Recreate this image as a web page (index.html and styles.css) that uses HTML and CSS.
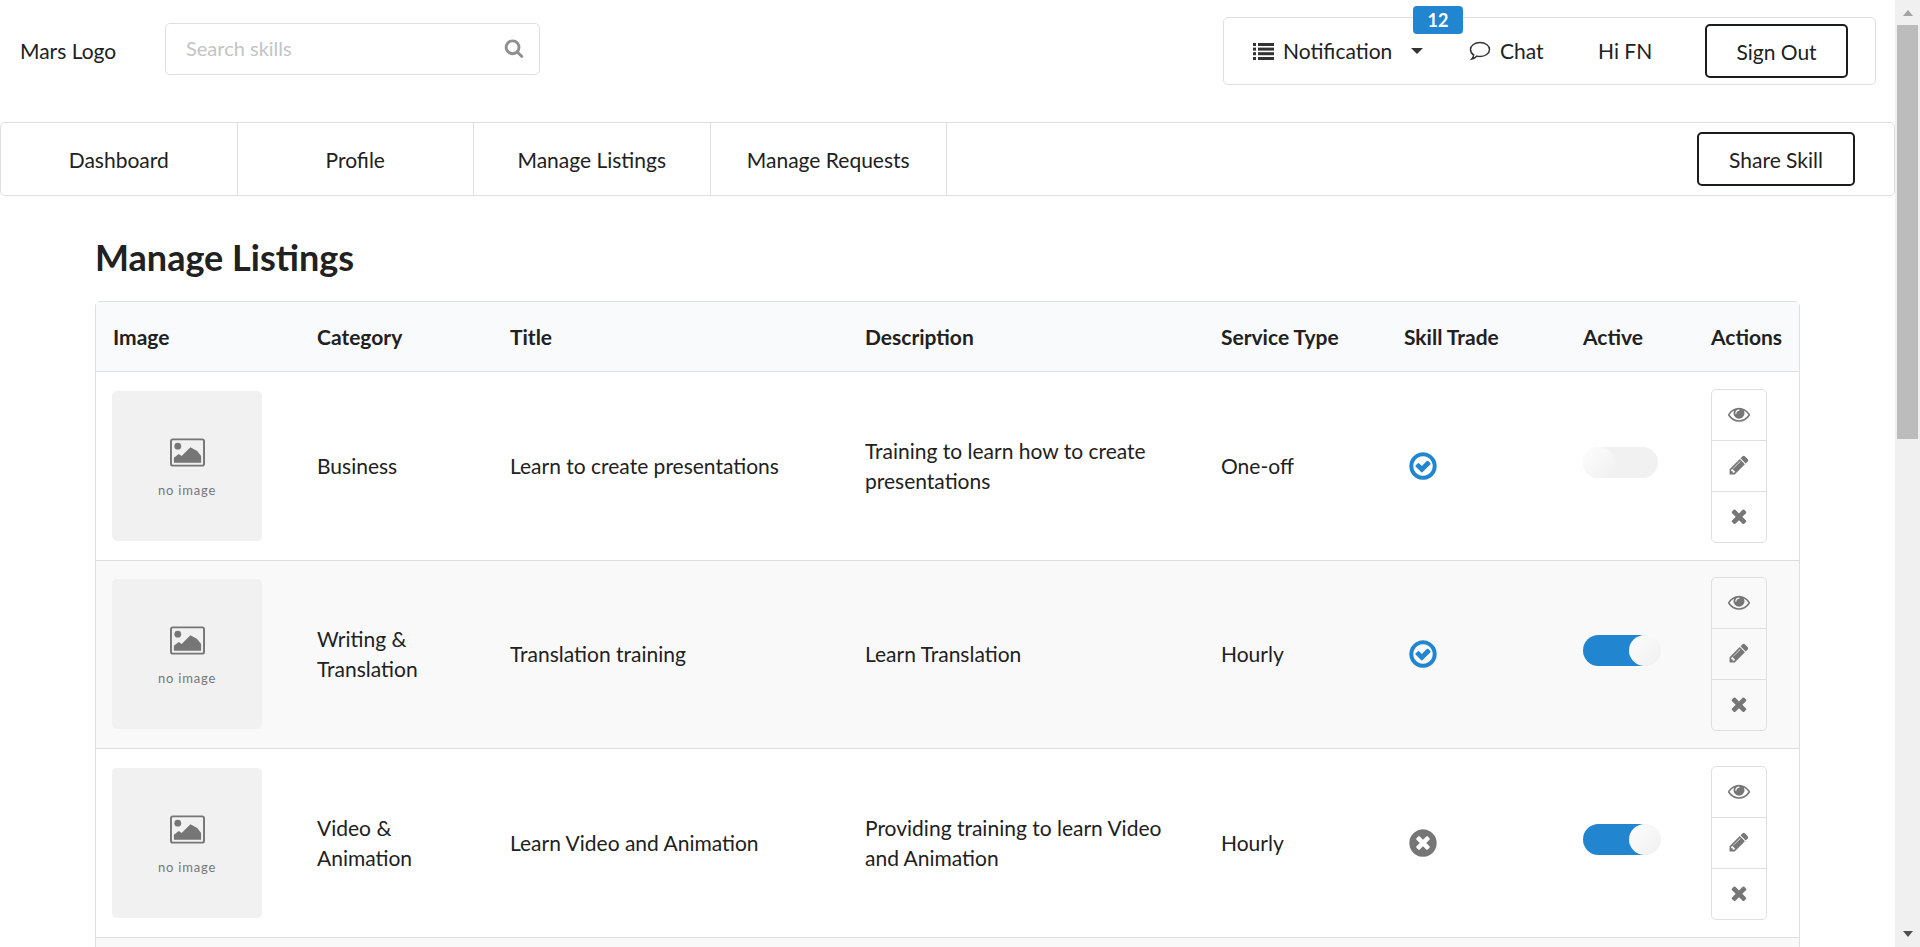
FILE: index.html
```html
<!DOCTYPE html>
<html lang="en">
<head>
  <meta charset="UTF-8" />
  <title>Manage Listings</title>
  <link rel="stylesheet" href="styles.css">
</head>
<body>
  <svg class="sprites" width="0" height="0">
    <symbol id="i-search" viewBox="0 0 1792 1792"><path d="M1216 832q0-185-131.500-316.500t-316.500-131.500-316.500 131.500-131.500 316.500 131.500 316.500 316.500 131.500 316.500-131.500 131.500-316.500zm512 832q0 52-38 90t-90 38q-54 0-90-38l-343-342q-179 124-399 124-143 0-273.500-55.500t-225-150-150-225-55.500-273.500 55.500-273.500 150-225 225-150 273.500-55.500 273.500 55.500 225 150 150 225 55.500 273.500q0 220-124 399l343 343q37 37 37 90z"/></symbol>
    <symbol id="i-eye" viewBox="0 0 1792 1792"><path d="M1664 960q-152-236-381-353 61 104 61 225 0 185-131.500 316.500t-316.500 131.500-316.500-131.500-131.500-316.500q0-121 61-225-229 117-381 353 133 205 333.500 326.500t434.500 121.500 434.500-121.500 333.500-326.500zm-720-384q0-20-14-34t-34-14q-125 0-214.500 89.500t-89.500 214.500q0 20 14 34t34 14 34-14 14-34q0-86 61-147t147-61q20 0 34-14t14-34zm848 384q0 34-20 69-140 230-376.500 368.500t-499.500 138.500-499.500-139-376.500-368q-20-35-20-69t20-69q140-229 376.500-368t499.500-139 499.500 139 376.500 368q20 35 20 69z"/></symbol>
    <symbol id="i-pencil" viewBox="0 0 1792 1792"><path d="M491 1536l91-91-235-235-91 91v107h128v128h107zm523-928q0-22-22-22-10 0-17 7l-542 542q-7 7-7 17 0 22 22 22 10 0 17-7l542-542q7-7 7-17zm-54-192l416 416-832 832h-416v-416zm683 96q0 53-37 90l-166 166-416-416 166-165q36-38 90-38 53 0 91 38l235 234q37 39 37 91z"/></symbol>
    <symbol id="i-times" viewBox="0 0 1792 1792"><path d="M1490 1322q0 40-28 68l-136 136q-28 28-68 28t-68-28l-294-294-294 294q-28 28-68 28t-68-28l-136-136q-28-28-28-68t28-68l294-294-294-294q-28-28-28-68t28-68l136-136q28-28 68-28t68 28l294 294 294-294q28-28 68-28t68 28l136 136q28 28 28 68t-28 68l-294 294 294 294q28 28 28 68z"/></symbol>
    <symbol id="i-check" viewBox="0 0 1792 1792"><path d="M1299 813l-422 422q-19 19-45 19t-45-19l-294-294q-19-19-19-45t19-45l102-102q19-19 45-19t45 19l147 147 275-275q19-19 45-19t45 19l102 102q19 19 19 45t-19 45zm141 83q0-148-73-273t-198-198-273-73-273 73-198 198-73 273 73 273 198 198 273 73 273-73 198-198 73-273zm224 0q0 209-103 385.500t-279.500 279.500-385.500 103-385.500-103-279.500-279.500-103-385.500 103-385.500 279.500-279.500 385.500-103 385.500 103 279.500 279.500 103 385.500z"/></symbol>
    <symbol id="i-cross" viewBox="0 0 1792 1792"><path d="M1277 1122q0-26-19-45l-181-181 181-181q19-19 19-45 0-27-19-46l-90-90q-19-19-46-19-26 0-45 19l-181 181-181-181q-19-19-45-19-27 0-46 19l-90 90q-19 19-19 46 0 26 19 45l181 181-181 181q-19 19-19 45 0 27 19 46l90 90q19 19 46 19 26 0 45-19l181-181 181 181q19 19 45 19 27 0 46-19l90-90q19-19 19-46zm387-226q0 209-103 385.500t-279.500 279.500-385.500 103-385.500-103-279.500-279.500-103-385.500 103-385.500 279.500-279.500 385.500-103 385.500 103 279.500 279.500 103 385.500z"/></symbol>
    <symbol id="i-picture" viewBox="0 0 36 29">
      <rect x="1" y="1" width="34" height="27" rx="2" fill="none" stroke="currentColor" stroke-width="2"/>
      <circle cx="8" cy="8" r="3.500"/>
      <path d="M4 25v-5l5-4 3 2 9-9 7 4 4 5v7z"/>
    </symbol>
  </svg>

  <div class="window">
    <div class="page">
      <header class="topbar">
        <div class="logo">Mars Logo</div>
        <div class="search">
          <span>Search skills</span>
          <svg class="search-icon"><use href="#i-search"/></svg>
        </div>
        <div class="user-menu">
          <div class="notif">
            <svg class="list-icon" viewBox="0 0 21 17">
              <rect x="0" y="0" width="3" height="3"/><rect x="5" y="0" width="16" height="3"/>
              <rect x="0" y="4.600" width="3" height="3"/><rect x="5" y="4.600" width="16" height="3"/>
              <rect x="0" y="9.200" width="3" height="3"/><rect x="5" y="9.200" width="16" height="3"/>
              <rect x="0" y="14" width="3" height="3"/><rect x="5" y="14" width="16" height="3"/>
            </svg>
            <span>Notification</span>
            <span class="caret"></span>
            <span class="badge">12</span>
          </div>
          <div class="chat">
            <svg class="chat-icon" viewBox="0 0 22 20">
              <path d="M11 1.500c5.200 0 9.500 3 9.500 7s-4.300 7-9.500 7c-1 0-2-.1-3-.4-1.200 1.300-3 2.500-5.200 2.900 1-1.100 1.700-2.400 1.900-4C2.800 12.800 1.500 10.800 1.500 8.500c0-4 4.300-7 9.500-7z"/>
            </svg>
            <span>Chat</span>
          </div>
          <div class="hi">Hi FN</div>
          <button class="btn signout">Sign Out</button>
        </div>
      </header>

      <nav class="tabs">
        <a>Dashboard</a>
        <a>Profile</a>
        <a>Manage Listings</a>
        <a>Manage Requests</a>
        <button class="btn share">Share Skill</button>
      </nav>

      <main class="content">
        <h1>Manage Listings</h1>
        <table class="listings">
          <thead>
            <tr>
              <th class="c-image">Image</th>
              <th class="c-cat">Category</th>
              <th class="c-title">Title</th>
              <th class="c-desc">Description</th>
              <th class="c-type">Service Type</th>
              <th class="c-trade">Skill Trade</th>
              <th class="c-active">Active</th>
              <th class="c-actions">Actions</th>
            </tr>
          </thead>
          <tbody>
            <tr>
              <td><div class="noimg"><svg><use href="#i-picture"/></svg><span>no image</span></div></td>
              <td>Business</td>
              <td>Learn to create presentations</td>
              <td>Training to learn how to create presentations</td>
              <td>One-off</td>
              <td><svg class="trade yes"><use href="#i-check"/></svg></td>
              <td><span class="toggle"></span></td>
              <td>
                <div class="actions">
                  <span><svg><use href="#i-eye"/></svg></span>
                  <span><svg><use href="#i-pencil"/></svg></span>
                  <span><svg><use href="#i-times"/></svg></span>
                </div>
              </td>
            </tr>
            <tr>
              <td><div class="noimg"><svg><use href="#i-picture"/></svg><span>no image</span></div></td>
              <td>Writing &amp; Translation</td>
              <td>Translation training</td>
              <td>Learn Translation</td>
              <td>Hourly</td>
              <td><svg class="trade yes"><use href="#i-check"/></svg></td>
              <td><span class="toggle on"></span></td>
              <td>
                <div class="actions">
                  <span><svg><use href="#i-eye"/></svg></span>
                  <span><svg><use href="#i-pencil"/></svg></span>
                  <span><svg><use href="#i-times"/></svg></span>
                </div>
              </td>
            </tr>
            <tr>
              <td><div class="noimg"><svg><use href="#i-picture"/></svg><span>no image</span></div></td>
              <td>Video &amp; Animation</td>
              <td>Learn Video and Animation</td>
              <td>Providing training to learn Video and Animation</td>
              <td>Hourly</td>
              <td><svg class="trade no"><use href="#i-cross"/></svg></td>
              <td><span class="toggle on"></span></td>
              <td>
                <div class="actions">
                  <span><svg><use href="#i-eye"/></svg></span>
                  <span><svg><use href="#i-pencil"/></svg></span>
                  <span><svg><use href="#i-times"/></svg></span>
                </div>
              </td>
            </tr>
            <tr>
              <td></td><td></td><td></td><td></td><td></td><td></td><td></td><td></td>
            </tr>
          </tbody>
        </table>
      </main>
    </div>

    <div class="scrollbar">
      <span class="arrow up"></span>
      <div class="track"><div class="thumb"></div></div>
      <span class="arrow down"></span>
    </div>
  </div>
</body>
</html>
```

FILE: styles.css
```css
:root {
  --text: #212121;
  --border: #dfdfdf;
  --blue: #2185d0;
  --icon: #767676;
}

html, body {
  margin: 0;
  height: 947px;
  overflow: hidden;
}

body {
  font-family: 'Lato', sans-serif;
  font-size: 21px;
  line-height: 30px;
  color: var(--text);
  background: #fff;
}

.sprites {
  position: absolute;
}

.window {
  display: flex;
  height: 947px;
}

.page {
  width: 1895px;
  flex: none;
  overflow: hidden;
}

/* top bar */
.topbar {
  display: flex;
  align-items: flex-start;
  height: 122px;
}

.logo {
  width: 165px;
  padding: 36px 0 0 20px;
  box-sizing: border-box;
}

.search {
  display: flex;
  align-items: center;
  justify-content: space-between;
  width: 375px;
  height: 52px;
  margin-top: 23px;
  padding: 0 15px 2px 20px;
  box-sizing: border-box;
  border: 1px solid var(--border);
  border-radius: 5px;
  color: #c4c4c4;
  font-size: 20px;
}

.search-icon {
  width: 20px;
  height: 20px;
  fill: #8f8f8f;
}

.user-menu {
  display: flex;
  align-items: center;
  width: 653px;
  height: 68px;
  margin: 17px 19px 0 auto;
  padding-left: 29px;
  box-sizing: border-box;
  border: 1px solid var(--border);
  border-radius: 5px;
}

.notif {
  position: relative;
  display: flex;
  align-items: center;
  width: 216px;
}

.list-icon {
  width: 21px;
  height: 17px;
  margin-right: 9px;
  fill: #333;
}

.caret {
  width: 0;
  height: 0;
  margin-left: 19px;
  border: 6px solid transparent;
  border-top-color: #333;
  border-bottom: 0;
}

.badge {
  position: absolute;
  left: 160px;
  top: -30px;
  width: 50px;
  height: 28px;
  background: var(--blue);
  border-radius: 4px;
  color: #fff;
  font-size: 18px;
  font-weight: 700;
  line-height: 28px;
  text-align: center;
}

.chat {
  display: flex;
  align-items: center;
  width: 129px;
}

.chat-icon {
  width: 22px;
  height: 20px;
  margin-right: 9px;
  fill: none;
  stroke: #333;
  stroke-width: 1.500;
}

.hi {
  width: 107px;
}

.btn {
  font-family: inherit;
  font-size: 21px;
  color: var(--text);
  background: #fff;
  border: 2px solid #1b1c1d;
  border-radius: 5px;
  padding: 0;
}

.signout {
  width: 143px;
  height: 54px;
}

/* tabs */
.tabs {
  display: flex;
  align-items: center;
  height: 74px;
  box-sizing: border-box;
  border: 1px solid var(--border);
  border-radius: 5px;
}

.tabs a {
  width: 236.500px;
  height: 100%;
  flex: none;
  box-sizing: border-box;
  border-right: 1px solid var(--border);
  text-align: center;
  line-height: 74px;
}

.share {
  width: 158px;
  height: 54px;
  margin-left: auto;
  margin-right: 39px;
}

/* content */
.content {
  padding: 0 95px;
}

h1 {
  margin: 0;
  height: 105px;
  box-sizing: border-box;
  padding-top: 39px;
  font-size: 36px;
  line-height: 44px;
  font-weight: 700;
}

.listings {
  width: 1705px;
  table-layout: fixed;
  border-collapse: separate;
  border-spacing: 0;
  border: 1px solid var(--border);
  border-radius: 5px;
}

.listings th {
  height: 70px;
  padding: 0 17px;
  box-sizing: border-box;
  background: #f9fafb;
  border-bottom: 1px solid var(--border);
  text-align: left;
  font-weight: 700;
  white-space: nowrap;
}

.c-image { width: 204px; }
.c-cat { width: 193px; }
.c-title { width: 355px; }
.c-desc { width: 356px; }
.c-type { width: 183px; }
.c-trade { width: 179px; }
.c-active { width: 128px; }
.c-actions { width: 105px; }

.listings td {
  height: 188.500px;
  padding: 0 17px;
  box-sizing: border-box;
  border-bottom: 1px solid var(--border);
}

.listings tbody tr:nth-child(even) td {
  background: #f9f9f9;
}

.noimg {
  display: flex;
  flex-direction: column;
  align-items: center;
  width: 150px;
  height: 150px;
  margin-left: -1px;
  padding-top: 47px;
  box-sizing: border-box;
  background: #f1f1f1;
  border-radius: 5px;
  color: #777;
}

.noimg svg {
  width: 35px;
  height: 29px;
  fill: var(--icon);
  color: var(--icon);
}

.noimg span {
  margin-top: 15px;
  font-size: 13px;
  line-height: 16px;
  letter-spacing: 0.800px;
}

.trade {
  display: block;
  width: 32px;
  height: 32px;
  margin-left: 3px;
}

.trade.yes {
  fill: var(--blue);
}

.trade.no {
  fill: var(--icon);
}

.toggle {
  position: relative;
  display: block;
  width: 75px;
  height: 31px;
  margin-top: -7px;
  background: #f1f1f1;
  border-radius: 16px;
}

.toggle::after {
  content: "";
  position: absolute;
  left: 0;
  top: 0;
  width: 32px;
  height: 31px;
  border-radius: 50%;
  background: linear-gradient(135deg, #fdfdfd, #f0f0f0);
}

.toggle.on {
  background: var(--blue);
}

.toggle.on::after {
  left: 46px;
}

.actions {
  display: flex;
  flex-direction: column;
  width: 56px;
  box-sizing: border-box;
  border: 1px solid var(--border);
  border-radius: 5px;
}

.actions span {
  display: flex;
  align-items: center;
  justify-content: center;
  height: 50px;
}

.actions span + span {
  border-top: 1px solid var(--border);
}

.actions svg {
  width: 22px;
  height: 22px;
  margin-bottom: 2px;
  fill: var(--icon);
}

/* scrollbar */
.scrollbar {
  display: flex;
  flex: 1;
  flex-direction: column;
  align-items: center;
  background: #f0f0f0;
}

.arrow {
  flex: none;
  width: 0;
  height: 0;
  border: 5.500px solid transparent;
}

.arrow.up {
  margin: 10px 0 9px;
  border-top: 0;
  border-bottom: 6px solid #a3a3a3;
}

.arrow.down {
  margin: 9px 0 10px;
  border-bottom: 0;
  border-top: 6px solid #505050;
}

.track {
  flex: 1;
  width: 100%;
}

.thumb {
  width: 21px;
  height: 414px;
  margin: 0 auto;
  background: #bcbcbc;
}
```
